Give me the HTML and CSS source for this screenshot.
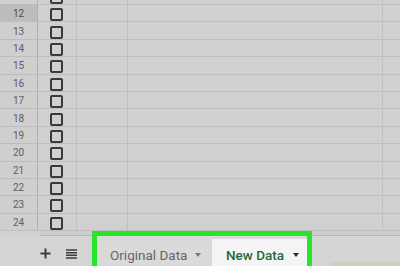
FILE: index.html
```html
<!DOCTYPE html>
<html>
<head>
<meta charset="utf-8">
<link rel="stylesheet" href="styles.css">
</head>
<body>
<div class="sheet">
  <div class="grid">
    <div class="row"><div class="num">11</div><div class="cell"><span class="box"></span></div><div class="cell"></div><div class="cell"></div><div class="cell last"></div></div>
    <div class="row"><div class="num sel">12</div><div class="cell"><span class="box"></span></div><div class="cell"></div><div class="cell"></div><div class="cell last"></div></div>
    <div class="row"><div class="num">13</div><div class="cell"><span class="box"></span></div><div class="cell"></div><div class="cell"></div><div class="cell last"></div></div>
    <div class="row"><div class="num">14</div><div class="cell"><span class="box"></span></div><div class="cell"></div><div class="cell"></div><div class="cell last"></div></div>
    <div class="row"><div class="num">15</div><div class="cell"><span class="box"></span></div><div class="cell"></div><div class="cell"></div><div class="cell last"></div></div>
    <div class="row"><div class="num">16</div><div class="cell"><span class="box"></span></div><div class="cell"></div><div class="cell"></div><div class="cell last"></div></div>
    <div class="row"><div class="num">17</div><div class="cell"><span class="box"></span></div><div class="cell"></div><div class="cell"></div><div class="cell last"></div></div>
    <div class="row"><div class="num">18</div><div class="cell"><span class="box"></span></div><div class="cell"></div><div class="cell"></div><div class="cell last"></div></div>
    <div class="row"><div class="num">19</div><div class="cell"><span class="box"></span></div><div class="cell"></div><div class="cell"></div><div class="cell last"></div></div>
    <div class="row"><div class="num">20</div><div class="cell"><span class="box"></span></div><div class="cell"></div><div class="cell"></div><div class="cell last"></div></div>
    <div class="row"><div class="num">21</div><div class="cell"><span class="box"></span></div><div class="cell"></div><div class="cell"></div><div class="cell last"></div></div>
    <div class="row"><div class="num">22</div><div class="cell"><span class="box"></span></div><div class="cell"></div><div class="cell"></div><div class="cell last"></div></div>
    <div class="row"><div class="num">23</div><div class="cell"><span class="box"></span></div><div class="cell"></div><div class="cell"></div><div class="cell last"></div></div>
    <div class="row"><div class="num">24</div><div class="cell"><span class="box"></span></div><div class="cell"></div><div class="cell"></div><div class="cell last"></div></div>
  </div>
  <div class="hscroll"><div class="gutter"></div><div class="thumb"></div></div>
  <div class="tabbar">
    <div class="icon add">
      <svg width="11" height="11" viewBox="0 0 11 11"><path d="M5.5 0.5v10M0.5 5.5h10" stroke="#3c3c3c" stroke-width="2"/></svg>
    </div>
    <div class="icon list">
      <svg width="11" height="10" viewBox="0 0 11 10"><path d="M0 1h11M0 3.7h11M0 6.3h11M0 9h11" stroke="#3c3c3c" stroke-width="1.6"/></svg>
    </div>
    <div class="tabs">
      <div class="tab">Original Data<span class="caret"></span></div>
      <div class="tab active">New Data<span class="caret"></span></div>
    </div>
    <div class="explore"></div>
  </div>
</div>
</body>
</html>
```
FILE: styles.css
```css
html, body {
  margin: 0;
  padding: 0;
}
body {
  width: 400px;
  height: 266px;
  overflow: hidden;
  background: #d4d4d4;
  font-family: Roboto, "Liberation Sans", sans-serif;
}
.sheet {
  display: flex;
  flex-direction: column;
  height: 266px;
  overflow: hidden;
}
.grid {
  margin-top: -12.4px;
  background: #d0d0d0;
}
.row {
  display: grid;
  grid-template-columns: 38px 39px 51px 255px 1fr;
  height: 17.4px;
  box-sizing: border-box;
  border-bottom: 1px solid #bdbdbd;
}
.num {
  border-right: 1px solid #b0b0b0;
  font-size: 10px;
  color: #5e5e5e;
  display: flex;
  align-items: center;
  justify-content: center;
  background: #cfcfcf;
  padding-top: 1px;
}
.num.sel {
  background: #bcbcbc;
  color: #4a4a4a;
}
.cell {
  border-right: 1px solid #c0c0c0;
  display: flex;
  align-items: center;
  padding-left: 12px;
}
.cell.last {
  border-right: none;
}
.box {
  width: 9px;
  height: 9px;
  border: 2px solid #3a3a3a;
  border-radius: 2px;
  margin-top: 3px;
}
.hscroll {
  display: flex;
  height: 9px;
  background: #cdcdcd;
}
.gutter {
  width: 40px;
  background: #d2d2d2;
}
.thumb {
  flex: 1;
  margin-top: 4px;
  background: #b5b5b5;
}
.tabbar {
  flex: 1;
  display: flex;
  align-items: flex-start;
  background: #d5d5d5;
}
.icon {
  display: flex;
  align-items: center;
  justify-content: center;
  height: 17px;
  margin-top: 9px;
}
.icon.add {
  width: 11px;
  margin-left: 40px;
}
.icon.list {
  width: 11px;
  margin-left: 15px;
}
.tabs {
  display: flex;
  margin-left: 20px;
  padding-top: 3px;
  height: 30px;
  box-sizing: border-box;
  outline: 5px solid #27e62a;
  background: #d9d9d9;
}
.tab {
  display: flex;
  align-items: flex-start;
  padding-top: 9px;
  font-size: 13.5px;
  line-height: 14px;
  color: #666666;
  background: #dadada;
  width: 115px;
  padding-left: 13px;
  box-sizing: border-box;
}
.tab.active {
  width: 95px;
  color: #1e6a37;
  background: #f4f4f4;
  padding-left: 14px;
  font-weight: 500;
}
.caret {
  width: 0;
  height: 0;
  border-left: 3.5px solid transparent;
  border-right: 3.5px solid transparent;
  border-top: 4px solid #777777;
  margin-left: 8px;
  margin-top: 5px;
}
.tab.active .caret {
  border-top-color: #2a2a2a;
  margin-left: 9px;
}
.explore {
  margin-left: auto;
  align-self: flex-end;
  width: 70px;
  height: 4px;
  background: #c7d2c2;
}
```
